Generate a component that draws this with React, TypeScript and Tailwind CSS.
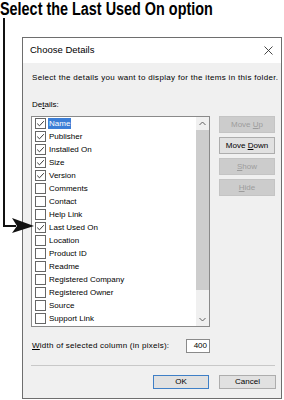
import React from "react";

// Columns offered in the Choose Details list
const DETAILS: { label: string; checked: boolean; selected?: boolean }[] = [
  { label: "Name", checked: true, selected: true },
  { label: "Publisher", checked: true },
  { label: "Installed On", checked: true },
  { label: "Size", checked: true },
  { label: "Version", checked: true },
  { label: "Comments", checked: false },
  { label: "Contact", checked: false },
  { label: "Help Link", checked: false },
  { label: "Last Used On", checked: true },
  { label: "Location", checked: false },
  { label: "Product ID", checked: false },
  { label: "Readme", checked: false },
  { label: "Registered Company", checked: false },
  { label: "Registered Owner", checked: false },
  { label: "Source", checked: false },
  { label: "Support Link", checked: false },
];

function CheckBox({ checked }: { checked: boolean }) {
  return (
    <span className="w-[11px] h-[11px] border border-[#666] bg-white flex items-center justify-center shrink-0">
      {checked && (
        <svg width="9" height="9" viewBox="0 0 9 9">
          <path d="M1.2 4.6 L3.5 6.8 L7.8 2.2" fill="none" stroke="#3a3a3a" strokeWidth="1" />
        </svg>
      )}
    </span>
  );
}

function SideButton({ children, enabled }: { children: React.ReactNode; enabled?: boolean }) {
  return (
    <div
      className={`w-[56px] h-[17px] flex items-center justify-center border ${
        enabled ? "bg-[#e1e1e1] border-[#adadad] text-black" : "bg-[#cccccc] border-[#c4c4c4] text-[#9c9c9c]"
      }`}
    >
      <span className="whitespace-pre">{children}</span>
    </div>
  );
}

export default function App() {
  return (
    <div className="relative w-[284px] h-[400px] bg-white overflow-hidden font-['Liberation_Sans',Arial,sans-serif]">
      {/* Callout caption */}
      <h1 className="h-[18px] leading-[18px] text-[18px] font-bold text-black whitespace-nowrap origin-left scale-x-[0.8]">
        Select the Last Used On option
      </h1>

      {/* Dialog */}
      <div className="ml-[22px] mt-[19px] w-[260px] h-[362px] border border-[#6e6e6e] flex flex-col text-[8px] text-black">
        <div className="h-[25px] bg-white flex items-center justify-between pl-[7px] pr-[8px]">
          <span className="text-[9.5px]">Choose Details</span>
          <svg width="9" height="9" viewBox="0 0 9 9">
            <path d="M0.5 0.5 L8.5 8.5 M8.5 0.5 L0.5 8.5" stroke="#333" strokeWidth="0.9" />
          </svg>
        </div>

        <div className="flex-1 bg-[#f0f0f0] pl-[8px] pr-[5px] pt-[10px] flex flex-col">
          <p className="leading-[10px] h-[10px] whitespace-nowrap pl-[1px] tracking-[0.32px]">
            Select the details you want to display for the items in this folder.
          </p>
          <p className="leading-[10px] h-[10px] mt-[17px] pl-[1px]">
            De<span className="underline">t</span>ails:
          </p>

          <div className="mt-[6px] flex">
            {/* List box */}
            <div className="w-[179px] h-[211px] border border-[#8a8a8a] bg-white flex">
              <div className="flex-1 flex flex-col">
                {DETAILS.map((d) => (
                  <div key={d.label} className="h-[13px] flex items-center pl-[3px] gap-[2px]">
                    <CheckBox checked={d.checked} />
                    <span
                      className={`leading-[11px] px-[1px] whitespace-nowrap ${
                        d.selected ? "bg-[#3c7ed6] text-white" : ""
                      }`}
                    >
                      {d.label}
                    </span>
                  </div>
                ))}
              </div>
              {/* Scrollbar */}
              <div className="w-[14px] bg-[#f0f0f0] flex flex-col border-l border-white">
                <div className="h-[13px] flex items-center justify-center">
                  <svg width="7" height="5" viewBox="0 0 7 5">
                    <path d="M0.5 4 L3.5 1 L6.5 4" fill="none" stroke="#606060" strokeWidth="1" />
                  </svg>
                </div>
                <div className="h-[160px] bg-[#cdcdcd]" />
                <div className="flex-1" />
                <div className="h-[13px] flex items-center justify-center">
                  <svg width="7" height="5" viewBox="0 0 7 5">
                    <path d="M0.5 1 L3.5 4 L6.5 1" fill="none" stroke="#606060" strokeWidth="1" />
                  </svg>
                </div>
              </div>
            </div>

            {/* Side buttons */}
            <div className="ml-[9px] flex flex-col gap-[4px]">
              <SideButton>
                Move <span className="underline">U</span>p
              </SideButton>
              <SideButton enabled>
                Move <span className="underline">D</span>own
              </SideButton>
              <SideButton>
                <span className="underline">S</span>how
              </SideButton>
              <SideButton>
                <span className="underline">H</span>ide
              </SideButton>
            </div>
          </div>

          <div className="mt-[12px] w-[179px] flex items-center justify-between">
            <span className="pl-[1px] whitespace-nowrap tracking-[0.25px]">
              <span className="underline">W</span>idth of selected column (in pixels):
            </span>
            <div className="w-[24px] h-[14px] border border-[#8a8a8a] bg-white flex items-center justify-end pr-[2px]">
              400
            </div>
          </div>

          <div className="mt-[12px] h-px bg-[#c8c8c8] mr-[1px]" />

          <div className="mt-[9px] flex justify-end gap-[10px]">
            <div className="w-[56px] h-[14px] border border-[#3f7fc6] bg-[#e1e1e1] flex items-center justify-center">
              OK
            </div>
            <div className="w-[57px] h-[14px] border border-[#adadad] bg-[#e1e1e1] flex items-center justify-center">
              Cancel
            </div>
          </div>
        </div>
      </div>

      {/* Callout line and arrow */}
      <svg className="absolute inset-0 pointer-events-none" width="284" height="400" viewBox="0 0 284 400">
        <path d="M4 18 L4 226 L16 226" fill="none" stroke="#111" strokeWidth="2" />
        <polygon points="12,218 34,226 12,233 17,226" fill="#111" />
      </svg>
    </div>
  );
}
